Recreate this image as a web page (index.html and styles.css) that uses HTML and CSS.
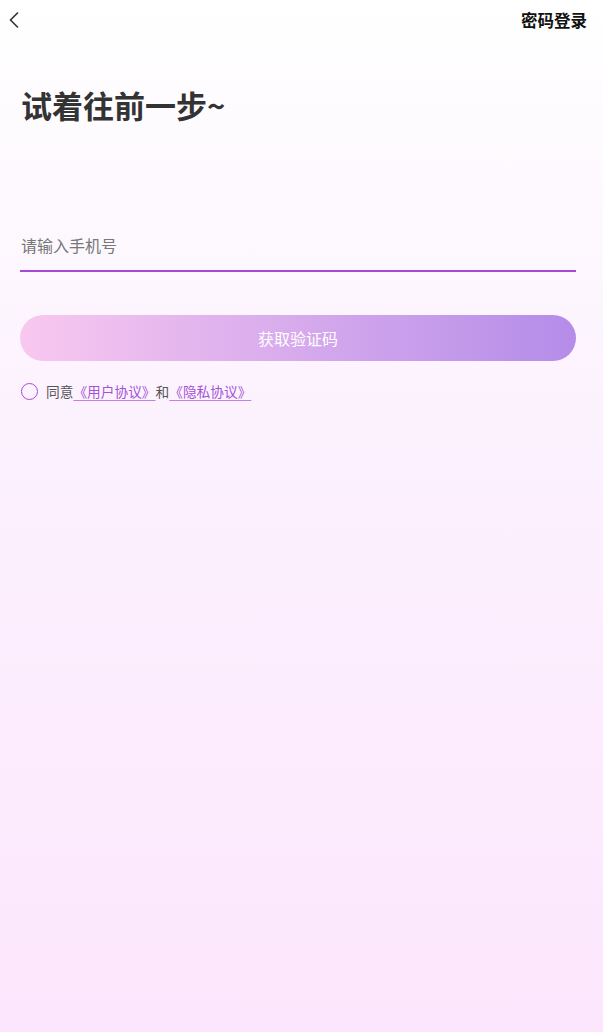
FILE: index.html
```html
<!DOCTYPE html>
<html lang="zh">
<head>
<meta charset="utf-8">
<link rel="stylesheet" href="styles.css">
</head>
<body>
<div class="page">
  <header class="topbar">
    <svg class="back" width="12" height="18" viewBox="0 0 12 18"><path d="M10 1.5 L2.5 9 L10 16.5" fill="none" stroke="#333" stroke-width="1.6"/></svg>
    <span class="pwd">密码登录</span>
  </header>
  <h1 class="title">试着往前一步~</h1>
  <div class="field">
    <span class="placeholder">请输入手机号</span>
  </div>
  <button class="btn">获取验证码</button>
  <div class="agree">
    <span class="circle"></span>
    <span class="txt">同意</span><a class="link">《用户协议》</a><span class="txt">和</span><a class="link">《隐私协议》</a>
  </div>
</div>
</body>
</html>
```
FILE: styles.css
```css
html, body { margin: 0; padding: 0; }
body {
  font-family: "Noto Sans CJK SC", "Noto Sans", sans-serif;
  background: linear-gradient(to bottom, #ffffff 0%, #fcf2fe 40%, #fce6fd 100%);
  min-height: 1032px;
  width: 603px;
}
.page { padding: 0 27px 0 20px; }
.topbar {
  height: 42px;
  display: flex;
  justify-content: space-between;
  align-items: center;
  margin-left: -12px;
  margin-right: -11px;
  padding-bottom: 2px;
  box-sizing: border-box;
}
.back { display: block; margin-top: -1px; }
.pwd { font-size: 16.5px; font-weight: 700; color: #111; }
.title {
  margin: 41px 0 0 1px;
  font-size: 31px;
  font-weight: 700;
  color: #333;
  line-height: 44px;
  letter-spacing: 0;
}
.field {
  margin-top: 101px;
  height: 42px;
  border-bottom: 2px solid #a64ad6;
  display: flex;
  align-items: center;
  box-sizing: content-box;
}
.placeholder { font-size: 16px; color: #777; padding-left: 1px; margin-top: -8px; }
.btn {
  display: block;
  width: 100%;
  height: 46px;
  margin-top: 43px;
  border: none;
  border-radius: 23px;
  background: linear-gradient(to right, #f9c8f0, #b48ce9);
  color: #fff;
  font-family: inherit;
  font-size: 16px;
  padding: 0;
  opacity: 1;
}
.agree {
  margin-top: 20px;
  display: flex;
  align-items: center;
  font-size: 13.7px;
  line-height: 20px;
  padding-left: 1px;
}
.circle {
  width: 15px; height: 15px;
  border: 1.5px solid #a64ad6;
  border-radius: 50%;
  margin-right: 8px;
}
.txt { color: #555; }
.link { color: #a453d6; text-decoration: underline; text-decoration-color: #c47ee6; text-underline-offset: 3px; }
```
